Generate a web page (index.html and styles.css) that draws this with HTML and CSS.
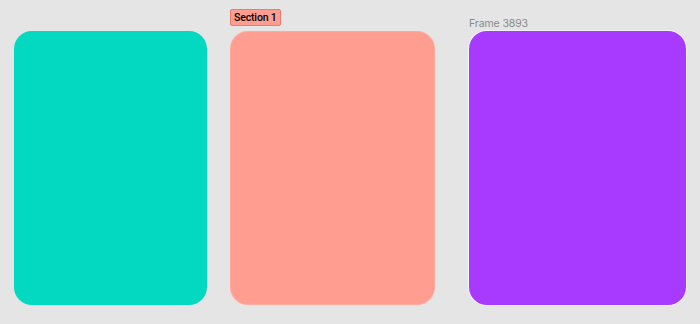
FILE: index.html
```html
<!DOCTYPE html>
<html>
<head>
<meta charset="utf-8">
<link rel="stylesheet" href="styles.css">
</head>
<body>
<div class="canvas">
  <div class="col col-teal">
    <div class="card teal"></div>
  </div>
  <div class="col col-salmon">
    <div class="section-label">Section 1</div>
    <div class="card salmon"></div>
  </div>
  <div class="col col-purple">
    <div class="frame-label">Frame 3893</div>
    <div class="card purple"></div>
  </div>
</div>
</body>
</html>
```
FILE: styles.css
```css
html, body {
  margin: 0;
  padding: 0;
  background: #e5e5e5;
  width: 700px;
  height: 324px;
  overflow: hidden;
  font-family: Inter, "Noto Sans", sans-serif;
}
.canvas {
  display: flex;
  align-items: flex-end;
  height: 305px;
  padding-left: 14px;
}
.col {
  display: flex;
  flex-direction: column;
  align-items: flex-start;
}
.col-teal { width: 193px; }
.col-salmon { width: 205px; margin-left: 23px; }
.col-purple { width: 217px; margin-left: 34px; }
.card {
  height: 274px;
  width: 100%;
  border-radius: 18px;
}
.teal { background: #02d9c0; }
.salmon { background: #ff9d90; box-shadow: inset 0 0 0 1px rgba(255,255,255,0.15); }
.purple { background: #a83aff; box-shadow: 0 0 0 1px rgba(255,255,255,0.6); }
.section-label {
  box-sizing: border-box;
  height: 17px;
  padding: 0 3px;
  background: #ff9d90;
  border: 1px solid #e57d70;
  border-radius: 2px;
  font-family: Roboto, Inter, sans-serif;
  font-size: 10.5px;
  font-weight: 500;
  line-height: 15px;
  color: #000;
  margin-bottom: 5px;
  letter-spacing: -0.15px;
  white-space: nowrap;
}
.frame-label {
  font-size: 10.5px;
  line-height: 13px;
  color: #8a8a8a;
  margin-bottom: 1px;
  letter-spacing: -0.1px;
}
```
